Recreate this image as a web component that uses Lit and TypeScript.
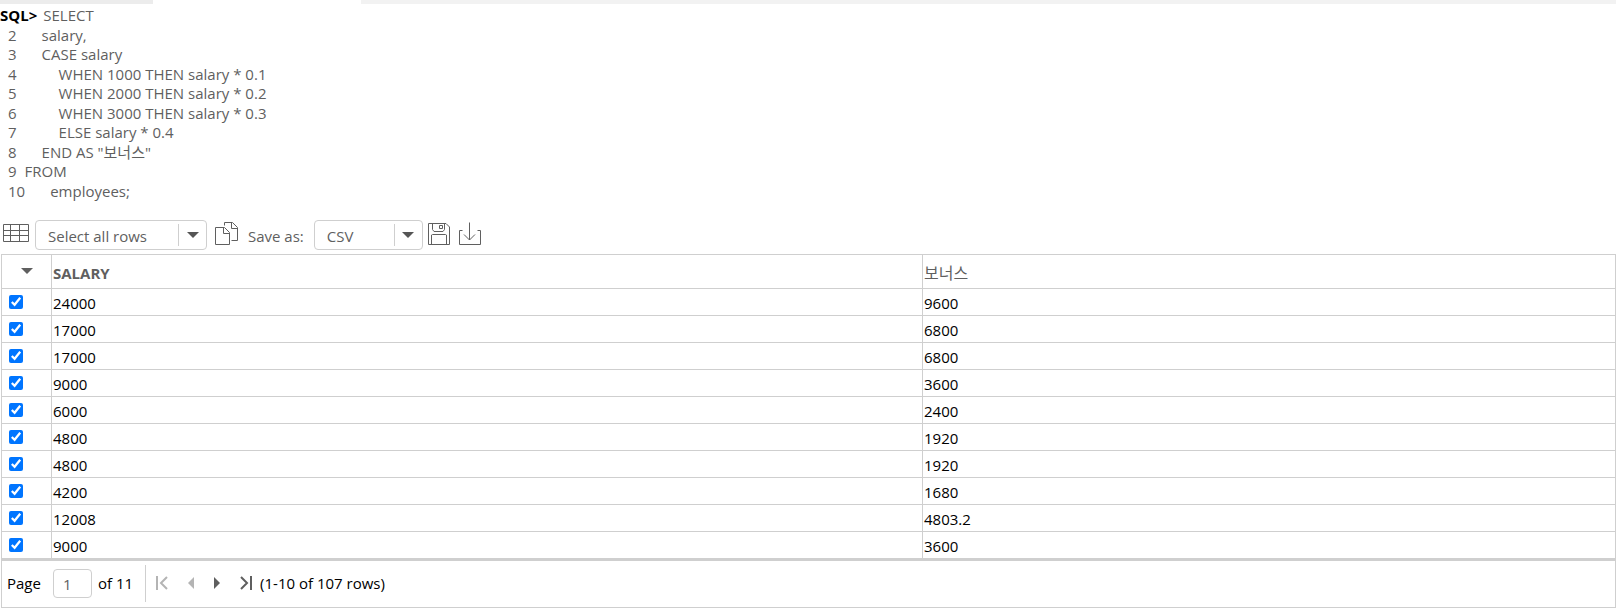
import { LitElement, html, css, svg } from "lit";
import { customElement, state } from "lit/decorators.js";

interface CodeLine {
  indent: number;
  text: string;
}

const QUERY: CodeLine[] = [
  { indent: 0, text: "SELECT" },
  { indent: 1, text: "salary," },
  { indent: 1, text: "CASE salary" },
  { indent: 2, text: "WHEN 1000 THEN salary * 0.1" },
  { indent: 2, text: "WHEN 2000 THEN salary * 0.2" },
  { indent: 2, text: "WHEN 3000 THEN salary * 0.3" },
  { indent: 2, text: "ELSE salary * 0.4" },
  { indent: 1, text: 'END AS "보너스"' },
  { indent: 0, text: "FROM" },
  { indent: 1, text: "employees;" },
];

const ROWS: [string, string][] = [
  ["24000", "9600"],
  ["17000", "6800"],
  ["17000", "6800"],
  ["9000", "3600"],
  ["6000", "2400"],
  ["4800", "1920"],
  ["4800", "1920"],
  ["4200", "1680"],
  ["12008", "4803.2"],
  ["9000", "3600"],
];

@customElement("app-root")
export class AppRoot extends LitElement {
  static styles = css`
    :host {
      display: block;
      background: #fff;
      color: #000;
      font: 15px/20px "Open Sans", "Noto Sans", "Noto Sans CJK KR", sans-serif;
    }
    * {
      box-sizing: border-box;
    }
    .tabs {
      display: flex;
      height: 4px;
    }
    .tab-idle {
      width: 153px;
      background: #ececec;
    }
    .tab-active {
      width: 208px;
    }
    .tab-rest {
      flex: 1;
      background: #f2f2f2;
    }
    .query {
      margin: 0;
      padding: 2px 0 0;
      list-style: none;
      color: #5f5f5f;
      line-height: 1.3;
    }
    .line {
      display: flex;
      gap: 8px;
      padding-left: 8px;
    }
    .line.first {
      gap: 6px;
      padding-left: 0;
    }
    .prompt {
      color: #000;
      font-weight: 700;
    }
    .indent-1 {
      padding-left: 17px;
    }
    .indent-2 {
      padding-left: 34px;
    }
    .toolbar {
      display: flex;
      align-items: center;
      padding: 19px 0 4px 2px;
      color: #5f5f5f;
    }
    button {
      display: flex;
      margin: 0;
      padding: 0;
      border: 0;
      background: none;
      color: #5f5f5f;
    }
    button:disabled {
      color: #b4b4b4;
    }
    .toolbar button {
      margin-bottom: 4px;
    }
    svg {
      display: block;
      fill: none;
      stroke: currentColor;
    }
    .solid {
      fill: currentColor;
      stroke: none;
    }
    .picker {
      display: grid;
      grid-template-columns: 1fr 28px;
      align-items: center;
      height: 30px;
      border: 1px solid #cfcfcf;
      border-radius: 4px;
    }
    .rows {
      width: 172px;
      margin: 0 8px 0 6px;
    }
    .format {
      width: 109px;
      margin: 0 5px 0 10px;
    }
    select {
      grid-area: 1 / 1 / 2 / 3;
      width: 100%;
      height: 28px;
      margin: 0;
      padding: 2px 30px 0 12px;
      border: 0;
      appearance: none;
      background: none;
      color: inherit;
      font: inherit;
    }
    .drop {
      grid-area: 1 / 2;
      display: grid;
      place-items: center;
      height: 22px;
      border-left: 1px solid #cfcfcf;
      color: #555;
      pointer-events: none;
    }
    .copy {
      margin-right: 10px;
    }
    .download {
      margin-left: 9px;
    }
    .save-label {
      padding-top: 2px;
    }
    .results {
      margin-left: 1px;
      border: 1px solid #cfcfcf;
    }
    table {
      width: 100%;
      border-spacing: 0;
      table-layout: fixed;
      border-bottom: 2px solid #cfcfcf;
    }
    th,
    td {
      padding: 1px 0 0 1px;
      border-bottom: 1px solid #cfcfcf;
      text-align: left;
      vertical-align: middle;
    }
    th {
      height: 34px;
      padding-top: 2px;
      color: #5f5f5f;
    }
    td {
      height: 27px;
    }
    th + th,
    td + td {
      border-left: 1px solid #cfcfcf;
    }
    .col-pick {
      width: 49px;
    }
    .col-salary {
      width: 54%;
    }
    .plain {
      font-size: 16px;
      font-weight: 400;
    }
    .sort {
      margin: 0 0 4px 18px;
    }
    .pick {
      padding: 0 0 0 7px;
    }
    input[type="checkbox"] {
      display: block;
      width: 14px;
      height: 14px;
      margin: 0;
      accent-color: #0075ff;
    }
    .pager {
      display: flex;
      align-items: center;
      height: 46px;
      padding: 0 0 2px 5px;
    }
    .page {
      width: 39px;
      height: 29px;
      margin: 0 6px 0 12px;
      padding: 2px 0 0 9px;
      border: 1px solid #cfcfcf;
      border-radius: 4px;
      color: #5f5f5f;
      font: inherit;
    }
    .nav {
      display: flex;
      align-items: center;
      height: 37px;
      margin: 0 8px 0 12px;
      padding-left: 10px;
      border-left: 1px solid #cfcfcf;
      gap: 20px;
    }
  `;

  @state() private picked = ROWS.map(() => true);

  private toggle(index: number) {
    this.picked = this.picked.map((on, i) => (i === index ? !on : on));
  }

  private arrowDown() {
    return html`<svg class="solid" width="12" height="6" viewBox="0 0 12 6">
      ${svg`<path d="M0 0H12L6 6Z" />`}
    </svg>`;
  }

  render() {
    return html`
      <div class="tabs">
        <div class="tab-idle"></div>
        <div class="tab-active"></div>
        <div class="tab-rest"></div>
      </div>

      <ol class="query">
        ${QUERY.map(
          (line, i) => html`<li class="line ${i ? "" : "first"}">
            <span class=${i ? "number" : "prompt"}>${i ? i + 1 : "SQL>"}</span>
            <span class="indent-${line.indent}">${line.text}</span>
          </li>`
        )}
      </ol>

      <div class="toolbar">
        <button aria-label="Table view">
          <svg width="27" height="20" viewBox="0 0 27 20">
            <path d="M1.5 1.5H26.5V18.5H1.5ZM1.5 7.5H26.5M1.5 12.5H26.5M8.5 1.5V18.5M17.5 1.5V18.5" />
          </svg>
        </button>
        <div class="picker rows">
          <select aria-label="Rows to select">
            <option>Select all rows</option>
          </select>
          <span class="drop">${this.arrowDown()}</span>
        </div>
        <button class="copy" aria-label="Copy">
          <svg width="23" height="23" viewBox="0 0 23 23">
            <path d="M.5 5.5H9.5L14.5 10.5V22.5H.5ZM8.5 5.5V11.5H14.5M9.5 3.5V.5H17.5L22.5 5.5V18.5H16.5M16.5 .5V6.5H22.5" />
          </svg>
        </button>
        <label class="save-label" for="format">Save as:</label>
        <div class="picker format">
          <select id="format">
            <option>CSV</option>
          </select>
          <span class="drop">${this.arrowDown()}</span>
        </div>
        <button aria-label="Save">
          <svg width="22" height="23" viewBox="0 0 22 23">
            <path d="M.5 1.5H18L21.5 5V22.5H.5ZM4.5 1.5V7.5L6 9.5H15L16.5 7.5V1.5M11.5 3.5H14.5V6.5H11.5ZM3.5 22.5V13L4.5 12.5H17.5L18.5 13V22.5" />
          </svg>
        </button>
        <button class="download" aria-label="Download">
          <svg width="22" height="23" viewBox="0 0 22 23">
            <path d="M3.5 8.5H.5V22.5H21.5V8.5H18.5M10.5 .5V18M5 12.5L10.5 18L16 12.5" />
          </svg>
        </button>
      </div>

      <div class="results">
        <table>
          <colgroup>
            <col class="col-pick" />
            <col class="col-salary" />
            <col />
          </colgroup>
          <thead>
            <tr>
              <th scope="col">
                <button class="sort" aria-label="Row options">${this.arrowDown()}</button>
              </th>
              <th scope="col">SALARY</th>
              <th scope="col" class="plain">보너스</th>
            </tr>
          </thead>
          <tbody>
            ${ROWS.map(
              ([salary, bonus], i) => html`<tr>
                <td class="pick">
                  <input
                    type="checkbox"
                    aria-label="Select row ${i + 1}"
                    .checked=${this.picked[i]}
                    @change=${() => this.toggle(i)}
                  />
                </td>
                <td>${salary}</td>
                <td>${bonus}</td>
              </tr>`
            )}
          </tbody>
        </table>

        <div class="pager">
          <label for="page">Page</label>
          <input id="page" class="page" type="text" value="1" />
          <span>of 11</span>
          <div class="nav">
            <button aria-label="First page" disabled>
              <svg width="12" height="14" viewBox="0 0 12 14" stroke-width="2">
                <path d="M1 0V14M11 1L5 7L11 13" />
              </svg>
            </button>
            <button aria-label="Previous page" disabled>
              <svg class="solid" width="6" height="12" viewBox="0 0 6 12"><path d="M6 0V12L0 6Z" /></svg>
            </button>
            <button aria-label="Next page">
              <svg class="solid" width="6" height="12" viewBox="0 0 6 12"><path d="M0 0V12L6 6Z" /></svg>
            </button>
            <button aria-label="Last page">
              <svg width="12" height="14" viewBox="0 0 12 14" stroke-width="2">
                <path d="M11 0V14M1 1L7 7L1 13" />
              </svg>
            </button>
          </div>
          <span>(1-10 of 107 rows)</span>
        </div>
      </div>
    `;
  }
}
